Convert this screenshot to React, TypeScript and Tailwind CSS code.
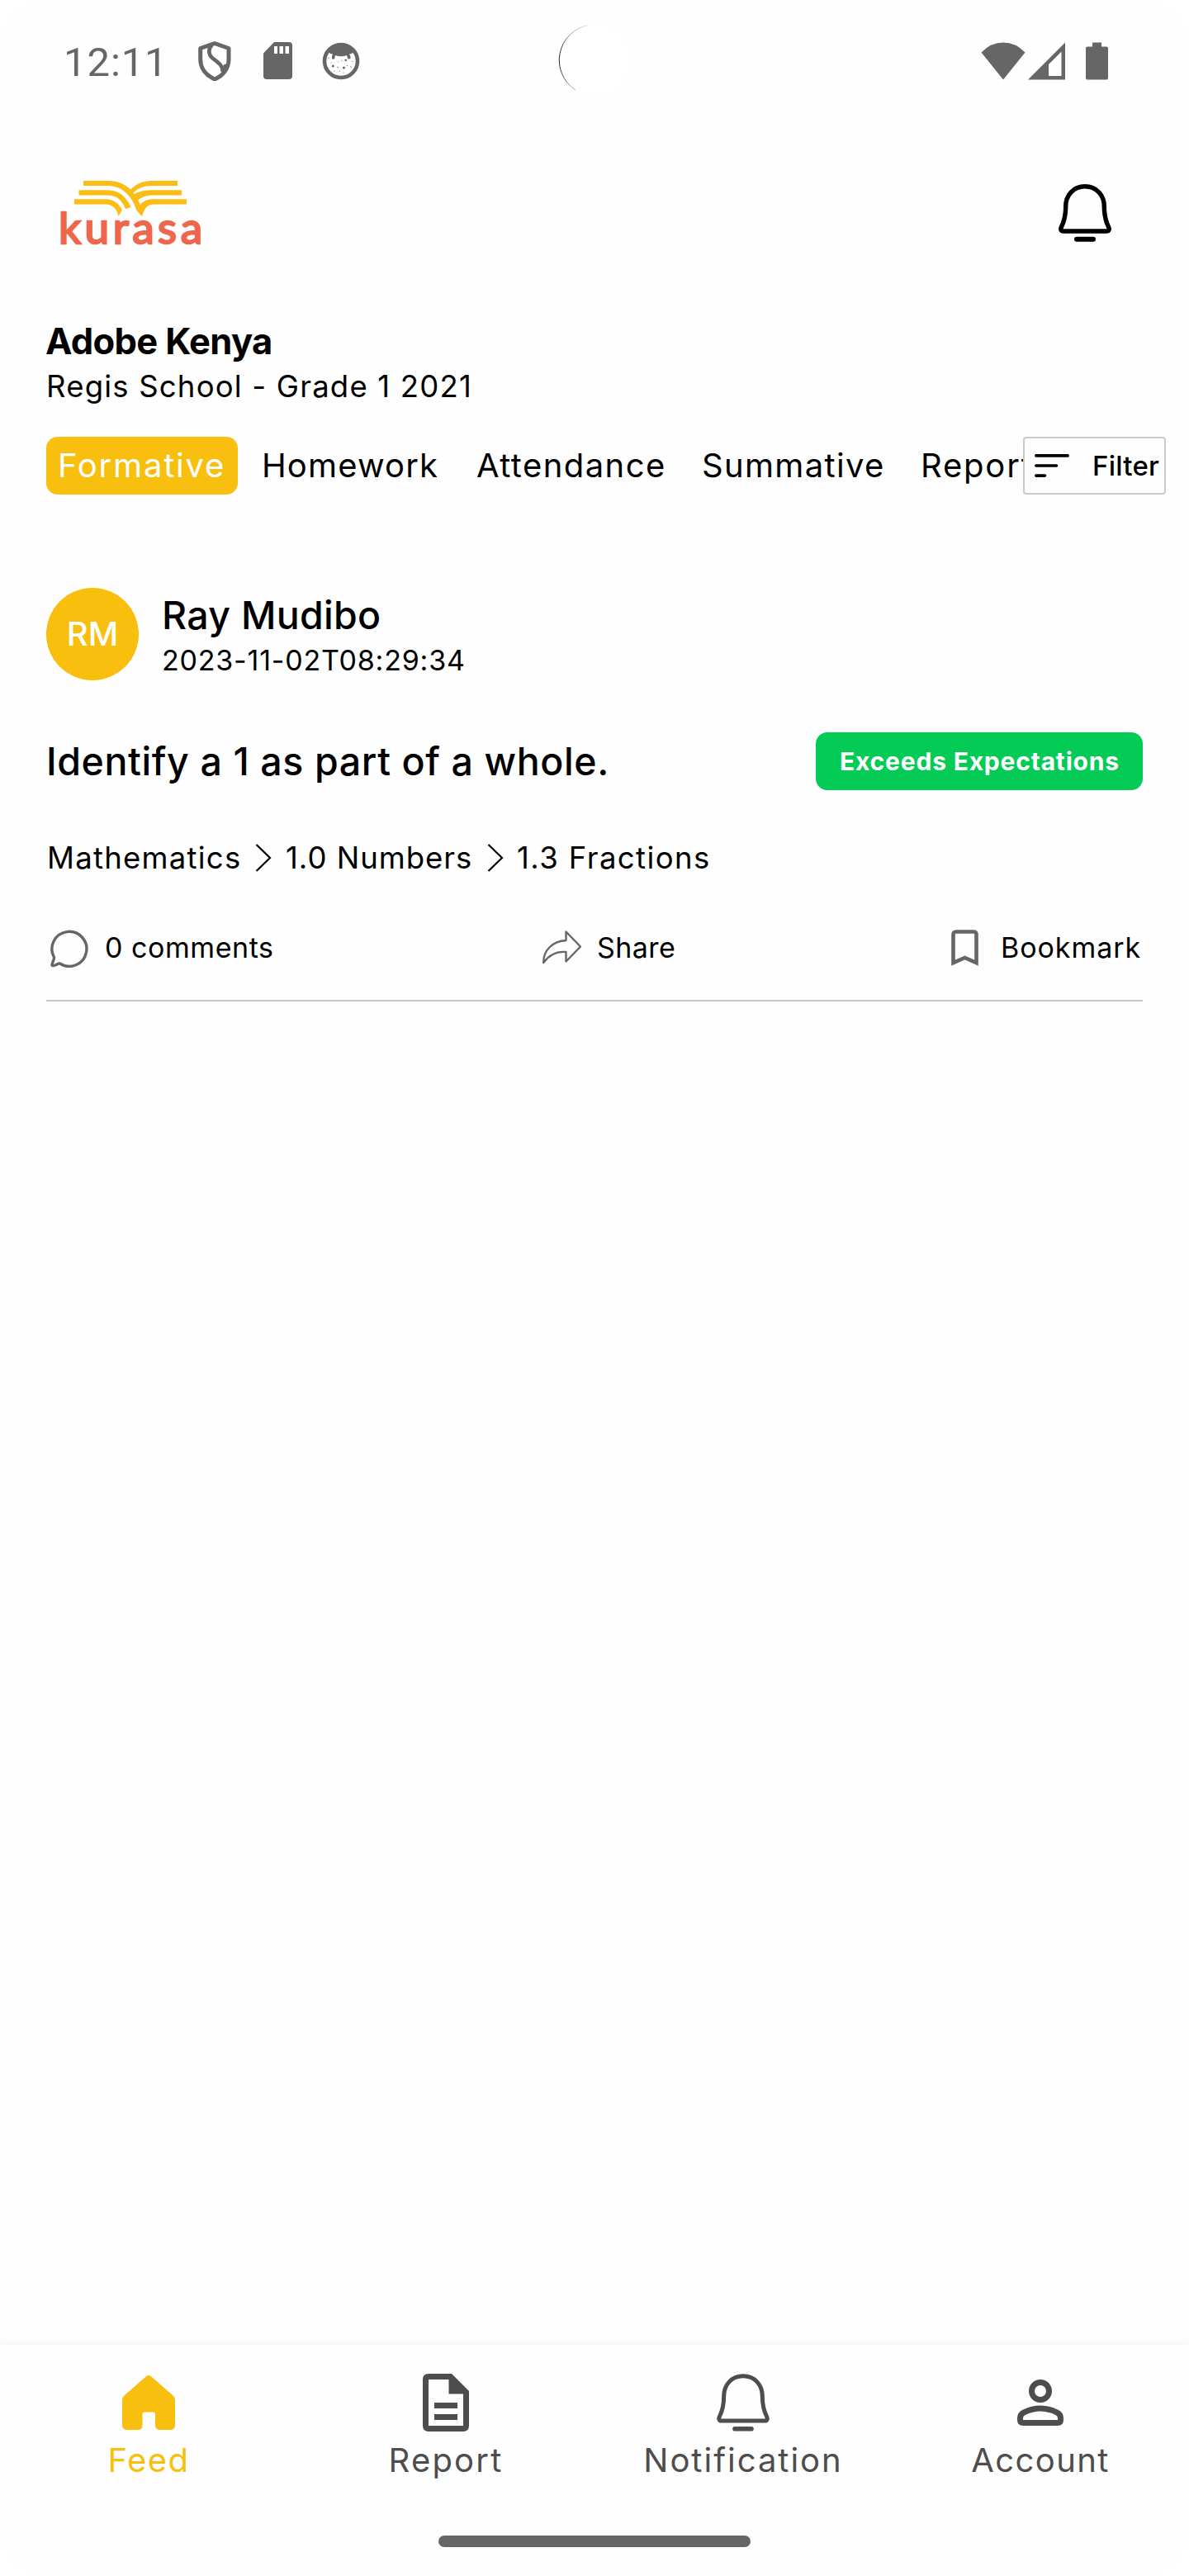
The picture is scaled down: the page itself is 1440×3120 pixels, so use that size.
import type { ReactNode } from 'react';

function BellIcon({ className, stroke = 6 }: { className: string; stroke?: number }) {
  return (
    <svg className={className} viewBox="0 0 64 70" fill="none" stroke="currentColor" strokeLinecap="round" strokeLinejoin="round">
      <path
        d="M32 2.8C18 2.8 8.7 13.5 8.7 27C8.7 38 6.8 45 3.6 51.5C1.8 55 3 57 6 57H58C61 57 62.2 55 60.4 51.5C57.2 45 55.3 38 55.3 27C55.3 13.5 46 2.8 32 2.8Z"
        strokeWidth={stroke - 0.6}
      />
      <path d="M22 66.8H42" strokeWidth={stroke} />
    </svg>
  );
}

function ShieldIcon() {
  return (
    <svg className="h-[48px] w-[40px]" viewBox="0 0 40 48" fill="none" stroke="#666" strokeWidth="5" strokeLinejoin="round">
      <path d="M20 2.5L37 8.5V22C37 33 30 41.500 20 46C10 41.500 2.700 33 2.700 22V8.500Z" />
      <path d="M17 4C12 9 12 16 17.500 20.500C24 25.500 30 29 29.500 37" strokeWidth="4.600" />
      <path d="M29 39L36 27L31 29Z" fill="#666" strokeWidth="1" />
    </svg>
  );
}

function SdCardIcon() {
  return (
    <svg className="h-[45px] w-[35px]" viewBox="0 0 35 45">
      <path fill="#666" d="M13 0H31Q35 0 35 4V41Q35 45 31 45H4Q0 45 0 41V13.500Z" />
      <path fill="#fefefe" d="M13 5H17V14H13ZM19.500 5H24V14H19.500ZM26.500 5H31V14H26.500Z" />
    </svg>
  );
}

function CatIcon() {
  return (
    <svg className="h-[46px] w-[46px]" viewBox="0 0 46 46" fill="#666">
      <circle cx="23" cy="23" r="20" fill="none" stroke="#666" strokeWidth="4.600" />
      <path d="M6 10Q14 1 23 1Q32 1 40 10L36 14L33 14.500Q35 17 34.500 20L31.500 20.500L30 16Q23 18.500 16 16L15 20.500L12 20.500Q11.500 17 13 14.500L10 14Z" />
      <circle cx="13.300" cy="29" r="1.500" />
      <circle cx="26.500" cy="31" r="1.500" />
      <circle cx="28.700" cy="22" r="1.300" />
      <circle cx="19" cy="30.500" r="0.700" />
      <circle cx="35" cy="30" r="0.700" />
      <circle cx="8" cy="19.500" r="0.700" />
      <circle cx="24" cy="22.500" r="0.600" />
      <circle cx="30.500" cy="28.500" r="0.600" />
      <circle cx="15" cy="35" r="0.600" />
      <circle cx="21.500" cy="35" r="0.600" />
      <circle cx="26" cy="37" r="0.600" />
      <circle cx="37" cy="23.500" r="0.600" />
      <circle cx="11" cy="25" r="0.500" />
      <circle cx="19.500" cy="24" r="0.500" />
    </svg>
  );
}

function StatusBar() {
  return (
    <div className="relative flex h-[147px] items-center pl-[77px] pr-[98px]">
      <span className="w-[163px] pt-[4px] font-[Roboto] text-[49px] leading-[56px] tracking-[0.900px] text-[#666]">12:11</span>
      <ShieldIcon />
      <div className="ml-[39px]">
        <SdCardIcon />
      </div>
      <div className="ml-[36px]">
        <CatIcon />
      </div>
      <svg className="absolute left-[676px] top-[29px] h-[88px] w-[88px]" viewBox="0 0 88 88">
        <defs>
          <linearGradient id="cameraEdge" x1="0" y1="44" x2="36" y2="44" gradientUnits="userSpaceOnUse">
            <stop offset="0" stopColor="#222" />
            <stop offset="0.400" stopColor="#999" />
            <stop offset="1" stopColor="#eee" />
          </linearGradient>
        </defs>
        <circle cx="44" cy="44" r="42.500" fill="#fff" />
        <path d="M37 1.500A43 43 0 0 0 21 80" fill="none" stroke="url(#cameraEdge)" strokeWidth="1" />
      </svg>
      <div className="ml-auto flex items-center text-[#666]">
        <svg className="h-[46px] w-[54px]" viewBox="0 0 54 46" fill="currentColor">
          <path d="M27 45.500L0.500 12.500Q12 0.500 27 0.500Q42 0.500 53.500 12.500Z" />
        </svg>
        <svg className="ml-[3px] h-[46px] w-[45px]" viewBox="0 0 45 46" fill="currentColor" fillRule="evenodd">
          <path d="M45 0.500V45.500H0ZM40.500 11.500L25 27V41H40.500Z" />
        </svg>
        <svg className="ml-[25px] h-[46px] w-[27px]" viewBox="0 0 27 46" fill="currentColor">
          <path d="M8 0.500H19V5.500H25Q27 5.500 27 7.500V43.500Q27 45.500 25 45.500H2Q0 45.500 0 43.500V7.500Q0 5.500 2 5.500H8Z" />
        </svg>
      </div>
    </div>
  );
}

function Logo() {
  return (
    <div className="flex h-[80px] w-[180px] flex-col">
      <svg className="ml-[20px] h-[44px] w-[136px] shrink-0" viewBox="0 0 136 44" fill="#fbbc14">
        <path d="M11 0H42C60 0 74 12 80 30L82 43L75 35C71 20 58 6 42 6H11Z" />
        <path d="M125 0V6H94C84 6 77 9 71.500 14.500L68 10.500C75 4 83 0 94 0Z" />
        <path d="M130 11.300V17.500H95C87 17.500 81 20 76.500 24L72.700 16C79 12.500 86 11.300 95 11.300Z" />
        <path d="M136 22.300V28.500H96C89 28.500 85 33 82 43L75 35L79 29.500C83 25 88 22.300 96 22.300Z" />
        <path d="M5.500 11.300H40C55 11.300 63 20 68.700 32L62 34C58 24 52 17.500 40 17.500H5.500Z" />
        <path d="M0 22.300H38C48 22.300 54 28 58 35L53.500 43C52 34 46 28.500 38 28.500H0Z" />
      </svg>
      <span className="-mt-[18px] ml-[1px] font-[Lato] text-[53px] leading-[60px] tracking-[4.600px] text-[#ee674d] [-webkit-text-stroke:2.400px_#ee674d]">
        kurasa
      </span>
    </div>
  );
}

function Tabs() {
  return (
    <div className="relative flex h-[70px] items-stretch whitespace-nowrap pl-[56px] text-[40px] leading-[70px]">
      <div className="w-[232px] rounded-[14px] bg-[#f8bf0e] pl-[14px] tracking-[1.790px] text-white">Formative</div>
      <div className="ml-[29px] w-[260px] tracking-[1.140px]">Homework</div>
      <div className="w-[273px] tracking-[1.440px]">Attendance</div>
      <div className="w-[265px] tracking-[1.330px]">Summative</div>
      <div className="w-[124px] overflow-hidden tracking-[1.800px]">Report</div>
      <button className="flex h-[70px] w-[173px] items-center rounded-[4px] border-2 border-[#c9c9c9] bg-[#fefefe] pl-[12px]">
        <svg className="h-[28px] w-[42px]" viewBox="0 0 42 28" stroke="#000" strokeWidth="3.600" strokeLinecap="round">
          <path d="M1.800 1.900H40.200M1.800 14H26.500M1.800 26.100H12.500" />
        </svg>
        <span className="ml-[28px] text-[33px] font-medium leading-[66px] tracking-[0.230px]">Filter</span>
      </button>
    </div>
  );
}

function Chevron() {
  return (
    <svg className="h-[34px] w-[20px] shrink-0" viewBox="0 0 20 34" fill="none" stroke="#000" strokeWidth="2.200">
      <path d="M1.500 1L18 17L1.500 33" />
    </svg>
  );
}

function FeedCard() {
  return (
    <section className="mx-[56px] flex flex-col border-b-[2px] border-[#cac4d0]">
      <div className="flex h-[112px] items-center">
        <div className="w-[112px] rounded-full bg-[#f8bf0e] text-center text-[40px] font-medium leading-[112px] text-white">RM</div>
        <div className="ml-[28px] flex flex-col pt-[8px]">
          <span className="text-[46.500px] font-medium leading-[56px] tracking-[0.300px]">Ray Mudibo</span>
          <span className="text-[34px] leading-[54px] tracking-[0.790px]">2023-11-02T08:29:34</span>
        </div>
      </div>
      <div className="mt-[63px] flex h-[70px] items-center justify-between">
        <h2 className="text-[46.500px] font-medium leading-[70px] tracking-[0.600px]">Identify a 1 as part of a whole.</h2>
        <span className="w-[396px] rounded-[14px] bg-[#04cb55] pl-[29px] text-[30px] font-bold leading-[70px] tracking-[0.800px] text-white">
          Exceeds Expectations
        </span>
      </div>
      <div className="mt-[55px] flex h-[54px] items-center whitespace-nowrap pl-[1px] text-[36.500px] leading-[54px]">
        <span className="w-[252px] tracking-[1.260px]">Mathematics</span>
        <Chevron />
        <span className="ml-[17px] w-[244px] tracking-[0.980px]">1.0 Numbers</span>
        <Chevron />
        <span className="ml-[16px] tracking-[1.420px]">1.3 Fractions</span>
      </div>
      <div className="mt-[54px] flex h-[56px] items-center text-[34px] leading-[56px]">
        <div className="flex w-[600px] items-center pl-[4px]">
          <svg className="h-[48px] w-[48px]" viewBox="0 0 48 48" fill="none" stroke="#666" strokeWidth="3.400" strokeLinejoin="round">
            <path d="M12.500 43A21 21 0 1 0 5.500 35.500C6 38 3 42.500 3 44.500C3 46.500 6 45.500 8 44.500C10 43.500 11 42.300 12.500 43Z" />
          </svg>
          <span className="ml-[19px] tracking-[0.550px]">0 comments</span>
        </div>
        <div className="flex items-center">
          <svg className="-mt-[3px] h-[42px] w-[50px]" viewBox="0 0 50 42" fill="none" stroke="#666" strokeWidth="2.400" strokeLinejoin="round">
            <path d="M29.500 2.500L47 20.500L29.500 38.500V27C18 26 9 30.500 2.200 40C2 25 13 14 29.500 13Z" />
          </svg>
          <span className="ml-[17px] tracking-[0.440px]">Share</span>
        </div>
        <div className="ml-auto flex items-center">
          <svg className="h-[44px] w-[33px]" viewBox="0 0 33 44" fill="none" stroke="#666" strokeWidth="4.600">
            <path d="M2.500 40.200V6Q2.500 2.500 6 2.500H27Q30.500 2.500 30.500 6V40.200L16.500 34Z" />
          </svg>
          <span className="ml-[27px] w-[172px] tracking-[0.950px]">Bookmark</span>
        </div>
      </div>
      <div className="h-[35px]" />
    </section>
  );
}

function NavItem({ icon, label, color, tracking }: { icon: ReactNode; label: string; color: string; tracking: string }) {
  return (
    <div className={`flex flex-1 flex-col items-center ${color}`}>
      <div className="flex h-[84px] items-center">{icon}</div>
      <span className={`mt-[1px] text-[40px] leading-[54px] ${tracking}`}>{label}</span>
    </div>
  );
}

function HomeIcon() {
  return (
    <svg className="h-[66px] w-[64px]" viewBox="0 0 64 66" fill="currentColor">
      <path d="M29 1.200Q32 -1 35 1.200L61 24Q64 26.500 64 30V60Q64 66 58 66H46Q40 66 40 60V47Q40 44.500 37.500 44.500H26.500Q24.500 44.500 24.500 47V60Q24.500 66 18.500 66H6Q0 66 0 60V30Q0 26.500 3 24Z" />
    </svg>
  );
}

function ReportIcon() {
  return (
    <svg className="h-[84px] w-[84px]" viewBox="0 0 24 24" fill="currentColor" fillRule="evenodd">
      <path d="M6 2H14L20 8V20Q20 22 18 22H6Q4 22 4 20V4Q4 2 6 2ZM6 4V20H18V9H13V4ZM8 12H16V14H8ZM8 16H16V18H8Z" />
    </svg>
  );
}

function AccountIcon() {
  return (
    <svg className="h-[84px] w-[84px]" viewBox="0 0 24 24" fill="none" stroke="currentColor" strokeWidth="2">
      <circle cx="12" cy="8" r="3" />
      <path d="M5 17.300C5 16.400 5.500 15.800 6.300 15.400C8.100 14.500 10 14 12 14C14 14 15.900 14.500 17.700 15.400C18.500 15.800 19 16.400 19 17.300V18Q19 19 18 19H6Q5 19 5 18Z" />
    </svg>
  );
}

export default function App() {
  return (
    <div className="h-[3120px] w-[1440px] overflow-hidden bg-white">
      <div className="flex h-full w-full flex-col rounded-[56px] bg-[#fefefe] font-[Inter] text-black">
        <StatusBar />
        <header className="flex h-[238px] items-start justify-between pl-[70px] pr-[94px] pt-[72px]">
          <Logo />
          <BellIcon className="mt-[4px] h-[70px] w-[64px]" />
        </header>
        <div className="flex flex-col">
          <h1 className="pl-[55px] text-[43.500px] font-bold leading-[56px] -tracking-[0.680px]">Adobe Kenya</h1>
          <p className="pl-[56px] text-[36.500px] leading-[55px] tracking-[1.200px]">Regis School - Grade 1 2021</p>
        </div>
        <div className="mt-[33px]">
          <Tabs />
        </div>
        <div className="mt-[113px]">
          <FeedCard />
        </div>
        <nav className="mt-auto flex h-[280px] flex-col shadow-[0_-3px_7px_rgba(0,0,0,0.045)]">
          <div className="flex pt-[28px]">
            <NavItem icon={<HomeIcon />} label="Feed" color="text-[#f8bf0e]" tracking="tracking-[1.500px]" />
            <NavItem icon={<ReportIcon />} label="Report" color="text-[#4d4d4d]" tracking="tracking-[2.200px]" />
            <NavItem icon={<BellIcon className="h-[70px] w-[64px]" stroke={5.6} />} label="Notification" color="text-[#4d4d4d]" tracking="tracking-[2.000px]" />
            <NavItem icon={<AccountIcon />} label="Account" color="text-[#4d4d4d]" tracking="tracking-[1.400px]" />
          </div>
          <div className="mx-auto mb-[35px] mt-auto h-[14px] w-[378px] rounded-full bg-[#666]" />
        </nav>
      </div>
    </div>
  );
}
